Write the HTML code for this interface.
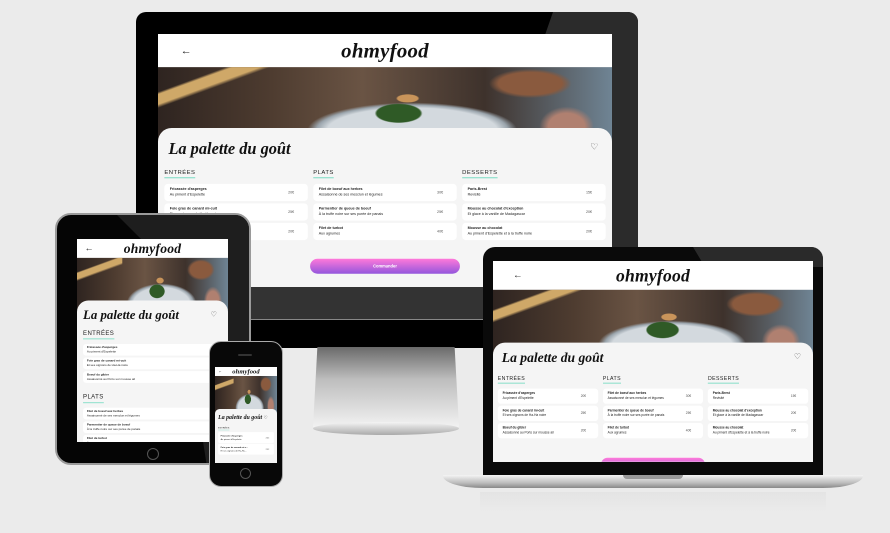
<!DOCTYPE html>
<html><head><meta charset="utf-8">
<style>
*{box-sizing:border-box;margin:0;padding:0}
body{width:890px;height:533px;overflow:hidden;background:#ebebeb;font-family:"Liberation Sans",sans-serif;position:relative}
.abs{position:absolute}
.site{position:absolute;left:0;top:0;transform-origin:0 0;background:#f5f5f5;overflow:hidden}
.hdr{background:#fff;position:relative;display:flex;align-items:center;justify-content:center}
.hdr .ar{position:absolute;left:50px;top:50%;transform:translateY(-50%);font-size:24px;color:#222}
.logo{font-family:"Liberation Serif",serif;font-weight:bold;font-style:italic;color:#111;letter-spacing:.5px}
.hero{position:relative;background:
 radial-gradient(ellipse 8% 20% at 53% 62%,#2f5a26 0 60%,transparent 66%),
 radial-gradient(ellipse 4% 9% at 55% 42%,#c9945a 0 55%,transparent 65%),
 radial-gradient(ellipse 34% 55% at 56% 85%,#d3d9de 0 55%,#9aa4ac 62%,transparent 68%),
 linear-gradient(160deg,transparent 0 20%,#cfa868 22% 30%,transparent 33%) 0 0/30% 100% no-repeat,
 radial-gradient(ellipse 14% 30% at 82% 22%,#8a5a3e 0 50%,transparent 65%),
 radial-gradient(ellipse 10% 45% at 90% 80%,#b08070 0 40%,transparent 60%),
 linear-gradient(90deg,#2e2420 0%,#4e3c30 25%,#6a5444 45%,#3e322c 72%,#6f8494 100%)}
.card{position:relative;background:#f5f5f5;border-radius:30px 30px 0 0;margin-top:-30px}
.title{font-family:"Liberation Serif",serif;font-weight:bold;font-style:italic;color:#111}
.heart{position:absolute;color:#555}
.cols{display:flex;gap:12px}
.col{flex:1}
.sec{font-size:13px;color:#222;letter-spacing:1px;display:inline-block;padding-bottom:4px;border-bottom:3px solid #99e2d0;margin-bottom:12px}
.it{background:#fff;border-radius:8px;height:38px;margin-bottom:5px;padding:6px 12px;position:relative;font-size:8px;color:#222;line-height:12px}
.it b{display:block;font-size:8px}
.it .p{position:absolute;right:30px;top:50%;transform:translateY(-50%);color:#555}
.btn{background:linear-gradient(#ff79da,#9356dc);border-radius:20px;height:33px;color:#fff;font-size:9px;font-weight:bold;text-align:center;line-height:33px}
</style></head><body>

<!-- MONITOR -->
<div class="abs" style="left:136px;top:12px;width:502px;height:336px;background:#000;border-radius:10px;overflow:hidden">
 <div class="abs" style="left:0;top:0;width:502px;height:336px;background:#2b2b2b;clip-path:polygon(417px 0,502px 0,502px 336px,300px 336px)"></div>
 <div class="abs" style="left:0;top:275px;width:502px;height:33px;background:#333"></div>
 <div class="abs" style="left:0;top:307px;width:502px;height:1px;background:#888"></div>
 <div class="abs" style="left:0;top:308px;width:502px;height:28px;background:#000"></div>
</div>
<div class="abs" style="left:313px;top:347px;width:146px;height:80px;background:linear-gradient(#6a6a6a,#bdbdbd 40%,#e0e0e0 80%,#f2f2f2);clip-path:polygon(3% 0,97% 0,100% 100%,0 100%)"></div>
<div class="abs" style="left:313px;top:422px;width:146px;height:13px;border-radius:50%;background:linear-gradient(#f4f4f4,#aaa)"></div>
<div class="abs" style="left:158px;top:34px;width:454px;height:253px;overflow:hidden;background:#f5f5f5">
 <div class="site" style="width:1000px;height:557px;transform:scale(.454)">
  <div class="hdr" style="height:73px"><span class="ar">←</span><span class="logo" style="font-size:46px">ohmyfood</span></div>
  <div class="hero" style="height:164px"></div>
  <div class="card" style="padding:24px 14px 0 14px;height:400px">
   <div class="title" style="font-size:36px;margin-left:9px">La palette du goût</div>
   <div class="heart" style="right:30px;top:28px;font-size:20px">♡</div>
   <div class="cols" style="margin-top:22px">
    <div class="col"><div class="sec">ENTRÉES</div>
     <div class="it"><b>Fricassée d'asperges</b>Au piment d'Espelette<span class="p">20€</span></div>
     <div class="it"><b>Foie gras de canard mi-cuit</b>Et ses oignons de Ha-Ha noire<span class="p">25€</span></div>
     <div class="it"><b>Boeuf du gibier</b>Assaisonné au Porto sur mousse ail<span class="p">20€</span></div></div>
    <div class="col"><div class="sec">PLATS</div>
     <div class="it"><b>Filet de boeuf aux herbes</b>Assaisonné de ses mesclun et légumes<span class="p">30€</span></div>
     <div class="it"><b>Parmentier de queue de boeuf</b>À la truffe noire sur ses purée de panais<span class="p">25€</span></div>
     <div class="it"><b>Filet de turbot</b>Aux agrumes<span class="p">40€</span></div></div>
    <div class="col"><div class="sec">DESSERTS</div>
     <div class="it"><b>Paris-Brest</b>Revisité<span class="p">15€</span></div>
     <div class="it"><b>Mousse au chocolat d'exception</b>Et glace à la vanille de Madagascar<span class="p">20€</span></div>
     <div class="it"><b>Mousse au chocolat</b>Au piment d'Espelette et à la truffe noire<span class="p">20€</span></div></div>
   </div>
   <div class="btn" style="width:330px;margin:36px auto 0">Commander</div>
  </div>
 </div>
</div>

<!-- LAPTOP -->
<div class="abs" style="left:483px;top:247px;width:340px;height:229px;background:#0a0a0a;border-radius:12px 12px 0 0;overflow:hidden">
 <div class="abs" style="left:0;top:0;width:340px;height:229px;background:#2a2a2a;clip-path:polygon(210px 0,340px 0,340px 20px,222px 20px)"></div>
</div>
<div class="abs" style="left:443px;top:475px;width:420px;height:13px;border-radius:0 0 40px 40px/0 0 12px 12px;background:linear-gradient(#f4f4f4,#bdbdbd 60%,#888)"></div>
<div class="abs" style="left:623px;top:475px;width:60px;height:4px;border-radius:0 0 6px 6px;background:#9a9a9a"></div>
<div class="abs" style="left:480px;top:492px;width:346px;height:20px;background:linear-gradient(#e4e4e4,#ebebeb)"></div>
<div class="abs" style="left:493px;top:261px;width:320px;height:201px;overflow:hidden;background:#f5f5f5">
 <div class="site" style="width:800px;height:502px;transform:scale(.4)">
  <div class="hdr" style="height:72px"><span class="ar">←</span><span class="logo" style="font-size:44px">ohmyfood</span></div>
  <div class="hero" style="height:162px"></div>
  <div class="card" style="padding:20px 12px 0 12px;height:400px">
   <div class="title" style="font-size:34px;margin-left:10px">La palette du goût</div>
   <div class="heart" style="right:30px;top:22px;font-size:20px">♡</div>
   <div class="cols" style="margin-top:22px">
    <div class="col"><div class="sec">ENTRÉES</div>
     <div class="it"><b>Fricassée d'asperges</b>Au piment d'Espelette<span class="p">20€</span></div>
     <div class="it"><b>Foie gras de canard mi-cuit</b>Et ses oignons de Ha-Ha noire<span class="p">25€</span></div>
     <div class="it"><b>Boeuf du gibier</b>Assaisonné au Porto sur mousse ail<span class="p">20€</span></div></div>
    <div class="col"><div class="sec">PLATS</div>
     <div class="it"><b>Filet de boeuf aux herbes</b>Assaisonné de ses mesclun et légumes<span class="p">30€</span></div>
     <div class="it"><b>Parmentier de queue de boeuf</b>À la truffe noire sur ses purée de panais<span class="p">25€</span></div>
     <div class="it"><b>Filet de turbot</b>Aux agrumes<span class="p">40€</span></div></div>
    <div class="col"><div class="sec">DESSERTS</div>
     <div class="it"><b>Paris-Brest</b>Revisité<span class="p">15€</span></div>
     <div class="it"><b>Mousse au chocolat d'exception</b>Et glace à la vanille de Madagascar<span class="p">20€</span></div>
     <div class="it"><b>Mousse au chocolat</b>Au piment d'Espelette et à la truffe noire<span class="p">20€</span></div></div>
   </div>
   <div class="btn" style="width:260px;margin:44px auto 0">Commander</div>
  </div>
 </div>
</div>

<!-- TABLET -->
<div class="abs" style="left:55px;top:213px;width:196px;height:252px;background:#050505;border-radius:16px;border:2px solid #9a9a9a;overflow:hidden">
 <div class="abs" style="left:0;top:0;width:196px;height:252px;background:#1e1e1e;clip-path:polygon(60px 0,196px 0,196px 252px,150px 252px,120px 60px)"></div>
</div>
<div class="abs" style="left:147px;top:448px;width:12px;height:12px;border-radius:50%;border:1px solid #555"></div>
<div class="abs" style="left:77px;top:239px;width:151px;height:203px;overflow:hidden;background:#f5f5f5">
 <div class="site" style="width:400px;height:538px;transform:scale(.3775)">
  <div class="hdr" style="height:50px"><span class="ar" style="left:20px">←</span><span class="logo" style="font-size:36px">ohmyfood</span></div>
  <div class="hero" style="height:143px"></div>
  <div class="card" style="padding:20px 16px 0 16px;height:400px">
   <div class="title" style="font-size:34px;margin-left:0">La palette du goût</div>
   <div class="heart" style="right:30px;top:26px;font-size:18px">♡</div>
   <div class="sec" style="margin-top:20px;font-size:16px">ENTRÉES</div>
   <div class="it" style="height:31px;padding:3px 10px"><b>Fricassée d'asperges</b>Au piment d'Espelette<span class="p" style="right:-6px">20€</span></div>
   <div class="it" style="height:31px;padding:3px 10px"><b>Foie gras de canard mi-cuit</b>Et ses oignons de Ha-Ha noire<span class="p" style="right:-6px">25€</span></div>
   <div class="it" style="height:31px;padding:3px 10px"><b>Boeuf du gibier</b>Assaisonné au Porto sur mousse ail<span class="p" style="right:-6px">20€</span></div>
   <div class="sec" style="margin-top:24px;font-size:16px">PLATS</div>
   <div class="it" style="height:31px;padding:3px 10px"><b>Filet de boeuf aux herbes</b>Assaisonné de ses mesclun et légumes<span class="p" style="right:-6px">30€</span></div>
   <div class="it" style="height:31px;padding:3px 10px"><b>Parmentier de queue de boeuf</b>À la truffe noire sur ses purée de panais<span class="p" style="right:-6px">25€</span></div>
   <div class="it" style="height:31px;padding:3px 10px"><b>Filet de turbot</b>Aux agrumes<span class="p" style="right:-6px">40€</span></div>
  </div>
 </div>
</div>

<!-- PHONE -->
<div class="abs" style="left:209px;top:341px;width:74px;height:146px;background:#080808;border-radius:12px;border:1.5px solid #aaa"></div>
<div class="abs" style="left:238px;top:354px;width:14px;height:2px;background:#333;border-radius:1px"></div>
<div class="abs" style="left:240px;top:468px;width:11px;height:11px;border-radius:50%;border:1px solid #555"></div>
<div class="abs" style="left:215px;top:367px;width:62px;height:96px;overflow:hidden;background:#f5f5f5">
 <div class="site" style="width:400px;height:620px;transform:scale(.155)">
  <div class="hdr" style="height:58px"><span class="ar" style="left:20px">←</span><span class="logo" style="font-size:42px">ohmyfood</span></div>
  <div class="hero" style="height:243px"></div>
  <div class="card" style="padding:30px 20px 0 20px;height:400px">
   <div class="title" style="font-size:38px">La palette du goût <span style="font-style:normal;font-weight:normal;font-size:30px">♡</span></div>
   <div class="sec" style="margin-top:40px;font-size:14px">ENTRÉES</div>
   <div class="it" style="height:70px;padding:12px 16px;font-size:14px;line-height:22px"><b style="font-size:14px">Fricassée d'asperges</b>Au piment d'Espelette<span class="p" style="font-size:14px">20€</span></div>
   <div class="it" style="height:70px;padding:12px 16px;font-size:14px;line-height:22px"><b style="font-size:14px">Foie gras de canard mi-c...</b>Et ses oignons de Ha-Ha...<span class="p" style="font-size:14px">25€</span></div>
  </div>
 </div>
</div>
</body></html>
